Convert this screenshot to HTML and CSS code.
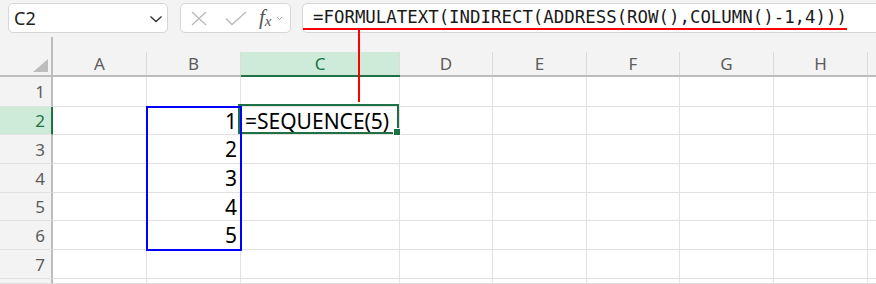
FILE: index.html
```html
<!DOCTYPE html>
<html lang="en">
<head>
  <meta charset="UTF-8">
  <title>FORMULATEXT</title>
  <link rel="stylesheet" href="styles.css">
</head>
<body>
  <div class="toolbar">
    <div class="namebox">
      <span>C2</span>
      <svg class="chev" width="14" height="8" viewBox="0 0 14 8"><polyline points="1.5,1.5 7,6.5 12.5,1.5" fill="none" stroke="#333" stroke-width="1.4"/></svg>
    </div>
    <div class="fxbox">
      <svg width="16" height="15" viewBox="0 0 16 15"><path d="M1 1L15 14M15 1L1 14" stroke="#b9b9b9" stroke-width="1.3" fill="none"/></svg>
      <svg width="22" height="15" viewBox="0 0 22 15"><polyline points="1,7.5 7,13.5 21,1" stroke="#b9b9b9" stroke-width="1.3" fill="none"/></svg>
      <span class="fx"><i>f</i><sub>x</sub></span>
      <svg width="7" height="5" viewBox="0 0 7 5"><polyline points="1,1 3.5,3.5 6,1" stroke="#aaa" stroke-width="1" fill="none"/></svg>
    </div>
    <div class="formula">
      <span class="ftext">=FORMULATEXT(INDIRECT(ADDRESS(ROW(),COLUMN()-1,4)))</span>
    </div>
  </div>

  <div class="callout"></div>

  <div class="sheet">
    <div class="corner"><div class="tri"></div></div>
    <div class="colhd"><div>A</div></div>
    <div class="colhd"><div>B</div></div>
    <div class="colhd sel"><div>C</div></div>
    <div class="colhd"><div>D</div></div>
    <div class="colhd"><div>E</div></div>
    <div class="colhd"><div>F</div></div>
    <div class="colhd"><div>G</div></div>
    <div class="colhd"><div>H</div></div>
    <div class="colhd"><div></div></div>

    <div class="rowhd">1</div>
    <div class="cell"></div><div class="cell"></div><div class="cell"></div><div class="cell"></div><div class="cell"></div><div class="cell"></div><div class="cell"></div><div class="cell"></div><div class="cell"></div>

    <div class="rowhd sel">2</div>
    <div class="cell"></div>
    <div class="cell num range">1<div class="range-box"></div></div>
    <div class="cell active">=SEQUENCE(5)<div class="sel-box"><span class="handle"></span></div></div>
    <div class="cell"></div><div class="cell"></div><div class="cell"></div><div class="cell"></div><div class="cell"></div><div class="cell"></div>

    <div class="rowhd">3</div>
    <div class="cell"></div><div class="cell num">2</div><div class="cell"></div><div class="cell"></div><div class="cell"></div><div class="cell"></div><div class="cell"></div><div class="cell"></div><div class="cell"></div>

    <div class="rowhd">4</div>
    <div class="cell"></div><div class="cell num">3</div><div class="cell"></div><div class="cell"></div><div class="cell"></div><div class="cell"></div><div class="cell"></div><div class="cell"></div><div class="cell"></div>

    <div class="rowhd">5</div>
    <div class="cell"></div><div class="cell num">4</div><div class="cell"></div><div class="cell"></div><div class="cell"></div><div class="cell"></div><div class="cell"></div><div class="cell"></div><div class="cell"></div>

    <div class="rowhd">6</div>
    <div class="cell"></div><div class="cell num">5</div><div class="cell"></div><div class="cell"></div><div class="cell"></div><div class="cell"></div><div class="cell"></div><div class="cell"></div><div class="cell"></div>

    <div class="rowhd">7</div>
    <div class="cell"></div><div class="cell"></div><div class="cell"></div><div class="cell"></div><div class="cell"></div><div class="cell"></div><div class="cell"></div><div class="cell"></div><div class="cell"></div>

    <div class="rowhd"></div>
    <div class="cell"></div><div class="cell"></div><div class="cell"></div><div class="cell"></div><div class="cell"></div><div class="cell"></div><div class="cell"></div><div class="cell"></div><div class="cell"></div>
  </div>
</body>
</html>
```

FILE: styles.css
```css
body {
  margin: 0;
  background-color: #f3f3f3;
  font-family: "Noto Sans", sans-serif;
  overflow: hidden;
  position: relative;
}

.toolbar {
  display: flex;
  height: 37px;
  padding: 3px 0 0 8px;
  box-sizing: border-box;
}

.namebox,
.fxbox,
.formula {
  height: 30px;
  box-sizing: border-box;
  background-color: #fff;
  border: 1px solid #d6d6d6;
  border-radius: 5px;
}

.namebox {
  width: 160px;
  display: flex;
  align-items: center;
  justify-content: space-between;
  padding: 0 4px 0 5px;
  font-size: 18px;
  color: #222;
}

.chev {
  margin-top: 2px;
}

.fxbox {
  width: 111px;
  margin-left: 12px;
  display: flex;
  align-items: center;
  padding-left: 10px;
}

.fxbox svg:nth-child(2) {
  margin-left: 18px;
}

.fx {
  margin-left: 12px;
  font-family: "Liberation Serif", serif;
  font-size: 21px;
  color: #555;
  line-height: 1;
}

.fx sub {
  font-size: 15px;
  font-style: italic;
  vertical-align: -2px;
}

.fxbox svg:last-child {
  margin-left: 4px;
}

.formula {
  flex: 1;
  margin-left: 11px;
  margin-right: -10px;
  border-radius: 5px 0 0 5px;
}

.ftext {
  display: inline-block;
  padding: 2px 0 0 10px;
  line-height: 22px;
  font-family: "DejaVu Sans Mono", monospace;
  font-size: 17.4px;
  color: #1a1a1a;
  border-bottom: 2px solid #ff0000;
}

.callout {
  position: absolute;
  left: 358px;
  top: 29px;
  width: 2px;
  height: 73px;
  background-color: #ff0000;
  z-index: 5;
}

.sheet {
  display: grid;
  grid-template-columns: 53px 94px 94px 159px 93px 94px 93px 94px 94px 40px;
  grid-template-rows: 40px 30px 28px 29px 29px 28px 29px 29px 5px;
}

.corner {
  border-right: 2px solid #bcbcbc;
  border-bottom: 2px solid #bcbcbc;
  position: relative;
}

.tri {
  position: absolute;
  right: 3px;
  bottom: 3px;
  width: 0;
  height: 0;
  border-left: 15px solid transparent;
  border-bottom: 13px solid #bdbdbd;
}

.colhd {
  padding-top: 15px;
  border-bottom: 2px solid #bcbcbc;
}

.colhd div {
  height: 100%;
  border-right: 1px solid #dcdcdc;
  display: flex;
  align-items: center;
  justify-content: center;
  font-size: 17px;
  color: #5c5c5c;
}

.colhd.sel {
  border-bottom-color: #1e7145;
}

.colhd.sel div {
  background-color: #cdebd8;
  color: #1e7145;
}

.rowhd {
  border-right: 2px solid #bcbcbc;
  border-bottom: 1px solid #e1e1e1;
  display: flex;
  align-items: center;
  justify-content: flex-end;
  padding-right: 6px;
  font-size: 17px;
  color: #5c5c5c;
}

.rowhd.sel {
  background-color: #cdebd8;
  border-right-color: #1e7145;
  color: #1e7145;
}

.cell {
  background-color: #fff;
  border-right: 1px solid #e1e1e1;
  border-bottom: 1px solid #e1e1e1;
  display: flex;
  align-items: center;
  padding: 0 4px;
  font-size: 21px;
  color: #000;
  position: relative;
  white-space: nowrap;
}

.num {
  justify-content: flex-end;
  padding-right: 3px;
}

.range-box {
  position: absolute;
  left: -1px;
  top: -1px;
  width: 96px;
  height: 145px;
  box-sizing: border-box;
  border: 2px solid #0000ff;
  z-index: 3;
}

.sel-box {
  position: absolute;
  left: -3px;
  top: -3px;
  width: 161px;
  height: 30px;
  box-sizing: border-box;
  border: 2px solid #1e7145;
  z-index: 2;
}

.handle {
  position: absolute;
  right: -4px;
  bottom: -4px;
  width: 6px;
  height: 6px;
  background-color: #1e7145;
  border: 1px solid #fff;
}
```
